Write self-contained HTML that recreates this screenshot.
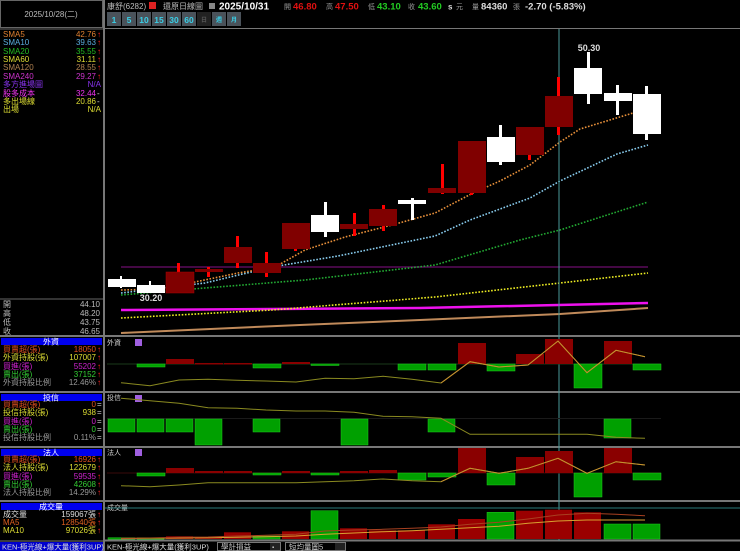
<!DOCTYPE html>
<html><head><meta charset="utf-8"><style>
html,body{margin:0;padding:0;background:#000;width:740px;height:551px;overflow:hidden}
svg{display:block}
text{font-family:"Liberation Sans","Noto Sans CJK TC",sans-serif}
.s{font-size:8px}
.cj{font-family:"Noto Sans CJK TC","WenQuanYi Zen Hei",sans-serif}
</style></head><body>
<svg width="740" height="551" viewBox="0 0 740 551" xmlns="http://www.w3.org/2000/svg">
<rect width="740" height="551" fill="#000"/>
<!-- left panel borders -->
<rect x="0.5" y="0.5" width="102" height="27" fill="none" stroke="#666"/>
<text x="51" y="17" class="s" fill="#bbb" text-anchor="middle">2025/10/28(二)</text>
<line x1="104" y1="0" x2="104" y2="551" stroke="#777" stroke-width="2"/>
<line x1="0" y1="29" x2="103" y2="29" stroke="#666"/>
<g class="s">
<text x="3" y="37" fill="#e08030">SMA5</text><text x="96" y="37" fill="#e08030" text-anchor="end">42.76</text>
<text x="3" y="45" fill="#5aaee0">SMA10</text><text x="96" y="45" fill="#5aaee0" text-anchor="end">39.63</text>
<text x="3" y="54" fill="#22bb22">SMA20</text><text x="96" y="54" fill="#22bb22" text-anchor="end">35.55</text>
<text x="3" y="62" fill="#dddd33">SMA60</text><text x="96" y="62" fill="#dddd33" text-anchor="end">31.11</text>
<text x="3" y="70" fill="#b08050">SMA120</text><text x="96" y="70" fill="#b08050" text-anchor="end">28.55</text>
<text x="3" y="79" fill="#cc33cc">SMA240</text><text x="96" y="79" fill="#cc33cc" text-anchor="end">29.27</text>
<text x="3" y="87" fill="#8833ee">多方進場圖</text><text x="101" y="87" fill="#8833ee" text-anchor="end">N/A</text>
<text x="3" y="96" fill="#ee33ee">股多成本</text><text x="96" y="96" fill="#ee33ee" text-anchor="end">32.44</text>
<text x="3" y="104" fill="#dddd33">多出場線</text><text x="96" y="104" fill="#dddd33" text-anchor="end">20.86</text>
<text x="3" y="112" fill="#dddd33">出場</text><text x="101" y="112" fill="#dddd33" text-anchor="end">N/A</text>
<g fill="#f22"><text x="97" y="37">↑</text><text x="97" y="45">↑</text><text x="97" y="54">↑</text><text x="97" y="62">↑</text><text x="97" y="70">↑</text><text x="97" y="79">↑</text></g>
<text x="97" y="96" fill="#ddd">-</text><text x="97" y="104" fill="#ddd">-</text>
</g>
<line x1="0" y1="299" x2="103" y2="299" stroke="#666"/>
<g class="s" fill="#bbb">
<text x="3" y="307">開</text><text x="100" y="307" text-anchor="end">44.10</text>
<text x="3" y="316">高</text><text x="100" y="316" text-anchor="end">48.20</text>
<text x="3" y="325">低</text><text x="100" y="325" text-anchor="end">43.75</text>
<text x="3" y="334">收</text><text x="100" y="334" text-anchor="end">46.65</text>
</g>
<!-- 外資 -->
<line x1="0" y1="336" x2="740" y2="336" stroke="#777" stroke-width="2"/>
<rect x="1" y="338" width="101" height="7" fill="#0000ee"/>
<text x="51" y="344.5" class="s" fill="#fff" text-anchor="middle">外資</text>
<g class="s">
<text x="3" y="352" fill="#e05020">買賣超(張)</text><text x="96" y="352" fill="#e05020" text-anchor="end">18050</text>
<text x="3" y="360" fill="#dddd33">外資持股(張)</text><text x="96" y="360" fill="#dddd33" text-anchor="end">107007</text>
<text x="3" y="369" fill="#cc22cc">買進(張)</text><text x="96" y="369" fill="#cc22cc" text-anchor="end">55202</text>
<text x="3" y="377" fill="#33cc33">賣出(張)</text><text x="96" y="377" fill="#33cc33" text-anchor="end">37152</text>
<text x="3" y="385" fill="#999">外資持股比例</text><text x="96" y="385" fill="#999" text-anchor="end">12.46%</text>
<g fill="#f22"><text x="97" y="352">↑</text><text x="97" y="360">↑</text><text x="97" y="369">↑</text><text x="97" y="377">↑</text><text x="97" y="385">↑</text></g>
</g>
<line x1="0" y1="392" x2="740" y2="392" stroke="#777" stroke-width="2"/>
<rect x="1" y="394" width="101" height="7" fill="#0000ee"/>
<text x="51" y="400.5" class="s" fill="#fff" text-anchor="middle">投信</text>
<g class="s">
<text x="3" y="407" fill="#e05020">買賣超(張)</text><text x="96" y="407" fill="#e05020" text-anchor="end">0</text>
<text x="3" y="415" fill="#dddd33">投信持股(張)</text><text x="96" y="415" fill="#dddd33" text-anchor="end">938</text>
<text x="3" y="424" fill="#cc22cc">買進(張)</text><text x="96" y="424" fill="#cc22cc" text-anchor="end">0</text>
<text x="3" y="432" fill="#33cc33">賣出(張)</text><text x="96" y="432" fill="#33cc33" text-anchor="end">0</text>
<text x="3" y="440" fill="#999">投信持股比例</text><text x="96" y="440" fill="#999" text-anchor="end">0.11%</text>
<g fill="#ccc"><text x="97" y="407">=</text><text x="97" y="415">=</text><text x="97" y="424">=</text><text x="97" y="432">=</text><text x="97" y="440">=</text></g>
</g>
<line x1="0" y1="447" x2="740" y2="447" stroke="#777" stroke-width="2"/>
<rect x="1" y="449" width="101" height="7" fill="#0000ee"/>
<text x="51" y="455.5" class="s" fill="#fff" text-anchor="middle">法人</text>
<g class="s">
<text x="3" y="462" fill="#e05020">買賣超(張)</text><text x="96" y="462" fill="#e05020" text-anchor="end">16926</text>
<text x="3" y="470" fill="#dddd33">法人持股(張)</text><text x="96" y="470" fill="#dddd33" text-anchor="end">122679</text>
<text x="3" y="479" fill="#cc22cc">買進(張)</text><text x="96" y="479" fill="#cc22cc" text-anchor="end">59535</text>
<text x="3" y="487" fill="#33cc33">賣出(張)</text><text x="96" y="487" fill="#33cc33" text-anchor="end">42608</text>
<text x="3" y="495" fill="#999">法人持股比例</text><text x="96" y="495" fill="#999" text-anchor="end">14.29%</text>
<g fill="#f22"><text x="97" y="462">↑</text><text x="97" y="470">↑</text><text x="97" y="479">↑</text><text x="97" y="487">↑</text><text x="97" y="495">↑</text></g>
</g>
<line x1="0" y1="501" x2="740" y2="501" stroke="#777" stroke-width="2"/>
<rect x="1" y="503" width="101" height="7" fill="#0000ee"/>
<text x="51" y="509.5" class="s" fill="#fff" text-anchor="middle">成交量</text>
<g class="s">
<text x="3" y="517" fill="#ddd">成交量</text><text x="96" y="517" fill="#ddd" text-anchor="end">159067張</text>
<text x="3" y="525" fill="#e06020">MA5</text><text x="96" y="525" fill="#e06020" text-anchor="end">128540張</text>
<text x="3" y="533" fill="#dddd33">MA10</text><text x="96" y="533" fill="#dddd33" text-anchor="end">97026張</text>
<g fill="#f22"><text x="97" y="517">↑</text><text x="97" y="525">↑</text><text x="97" y="533">↑</text></g>
</g>
<line x1="0" y1="541" x2="740" y2="541" stroke="#777" stroke-width="1"/>
<rect x="0" y="542" width="103" height="9" fill="#0000cc"/>
<text x="2" y="549.5" font-size="7.5" fill="#ddd">KEN-極光線+爆大量(獲利3UP)</text>
<text x="107" y="549.5" font-size="7.5" fill="#ddd">KEN-極光線+爆大量(獲利3UP)</text>
<rect x="217.5" y="542.5" width="63" height="8" fill="#000" stroke="#777"/>
<text x="221" y="549.5" font-size="7.5" fill="#ccc">學計損益</text>
<rect x="270" y="543" width="10" height="7" fill="#222"/><text x="272" y="549" font-size="6" fill="#ccc">▪</text>
<rect x="285.5" y="542.5" width="60" height="8" fill="#000" stroke="#777"/>
<text x="289" y="549.5" font-size="7.5" fill="#ccc">短均量圖5</text>
<rect x="335" y="543" width="10" height="7" fill="#222"/>

<!-- header -->
<text x="107" y="9" font-size="8" fill="#bbb">康舒(6282)</text>
<rect x="149" y="2" width="7" height="7" fill="#d22"/>
<text x="163" y="9" font-size="8" fill="#bbb">還原日線圖</text>
<rect x="209" y="3" width="6" height="6" fill="#888"/>
<text x="219" y="9.5" font-size="10" font-weight="bold" fill="#fff">2025/10/31</text>
<text x="284" y="9" font-size="7" fill="#999">開</text>
<text x="293" y="9.5" font-size="9.5" font-weight="bold" fill="#e01010">46.80</text>
<text x="326" y="9" font-size="7" fill="#999">高</text>
<text x="335" y="9.5" font-size="9.5" font-weight="bold" fill="#e01010">47.50</text>
<text x="368" y="9" font-size="7" fill="#999">低</text>
<text x="377" y="9.5" font-size="9.5" font-weight="bold" fill="#22cc22">43.10</text>
<text x="408" y="9" font-size="7" fill="#999">收</text>
<text x="418" y="9.5" font-size="9.5" font-weight="bold" fill="#22cc22">43.60</text>
<text x="448" y="9.5" font-size="8" font-weight="bold" fill="#ddd">s</text>
<text x="456" y="9" font-size="7" fill="#999">元</text>
<text x="472" y="9" font-size="7" fill="#999">量</text>
<text x="481" y="9.5" font-size="9.5" font-weight="bold" fill="#ddd">84360</text>
<text x="513" y="9" font-size="7" fill="#999">張</text>
<text x="525" y="9.5" font-size="9.5" font-weight="bold" fill="#ddd">-2.70 (-5.83%)</text>
<!-- buttons -->
<g font-size="8.5" font-weight="bold" fill="#3ad0e8" text-anchor="middle">
<rect x="107" y="12" width="14" height="14" fill="#4a525a"/><text x="114" y="23">1</text>
<rect x="122" y="12" width="14" height="14" fill="#4a525a"/><text x="129" y="23">5</text>
<rect x="137" y="12" width="14" height="14" fill="#4a525a"/><text x="144" y="23">10</text>
<rect x="152" y="12" width="14" height="14" fill="#4a525a"/><text x="159" y="23">15</text>
<rect x="167" y="12" width="14" height="14" fill="#4a525a"/><text x="174" y="23">30</text>
<rect x="182" y="12" width="14" height="14" fill="#4a525a"/><text x="189" y="23">60</text>
<rect x="197" y="12" width="14" height="14" fill="#222"/><text x="204" y="22" font-size="6" fill="#555">日</text>
<rect x="212" y="12" width="14" height="14" fill="#4a525a"/><text x="219" y="22" font-size="6">週</text>
<rect x="227" y="12" width="14" height="14" fill="#4a525a"/><text x="234" y="22" font-size="6">月</text>
</g>
<line x1="105" y1="28.5" x2="740" y2="28.5" stroke="#777"/>

<!-- main chart lines -->
<line x1="121" y1="267" x2="648" y2="267" stroke="#5a0a5a" stroke-width="1.5"/>
<polyline points="121,333 300,325 420,320 560,314 648,308" fill="none" stroke="#c08a5a" stroke-width="2"/>
<polyline points="121,310 420,308 648,303" fill="none" stroke="#ee11ee" stroke-width="2.5"/>
<g fill="none" stroke-width="1.6" stroke-dasharray="1.6 1.6">
<polyline points="121,318 272,310 435,297 560,283 648,273" stroke="#eeee22"/>
<polyline points="121,295 205,288 305,280 435,265 520,240 560,230 648,202" stroke="#22aa33"/>
<polyline points="121,293 205,283 272,267 338,256 435,236 470,220 530,198 560,181 617,154 648,145" stroke="#88ccee"/>
<polyline points="121,290 165,289 195,282 238,273 275,267 305,250 345,237 392,225 435,213 473,193 500,181 530,165 560,142 580,129 643,110" stroke="#e8903a"/>
</g>
<line x1="559" y1="29" x2="559" y2="541" stroke="#4a9a9a" stroke-width="1"/>

<!-- candles -->
<g>
<!-- 0 white -->
<rect x="120" y="276" width="2" height="12" fill="#fff"/><rect x="108" y="279" width="28" height="8" fill="#fff"/>
<rect x="149" y="281" width="2" height="12" fill="#fff"/><rect x="137" y="285" width="28" height="8" fill="#fff"/>
<rect x="177" y="263" width="3" height="30" fill="#f00"/><rect x="166" y="272" width="28" height="21" fill="#800000" stroke="#a00" stroke-width=".5"/>
<rect x="207" y="267" width="3" height="10" fill="#f00"/><rect x="195" y="269" width="28" height="3" fill="#800000"/>
<rect x="236" y="236" width="3" height="32" fill="#f00"/><rect x="224" y="247" width="28" height="16" fill="#800000"/>
<rect x="265" y="252" width="3" height="25" fill="#f00"/><rect x="253" y="263" width="28" height="10" fill="#800000"/>
<rect x="294" y="244" width="3" height="7" fill="#f00"/><rect x="282" y="223" width="28" height="26" fill="#800000"/>
<rect x="324" y="202" width="3" height="35" fill="#fff"/><rect x="311" y="215" width="28" height="17" fill="#fff"/>
<rect x="353" y="213" width="3" height="23" fill="#f00"/><rect x="340" y="224" width="28" height="5" fill="#800000"/>
<rect x="382" y="205" width="3" height="26" fill="#f00"/><rect x="369" y="209" width="28" height="17" fill="#800000"/>
<rect x="411" y="198" width="3" height="22" fill="#fff"/><rect x="398" y="200" width="28" height="4" fill="#fff"/>
<rect x="441" y="164" width="3" height="30" fill="#f00"/><rect x="428" y="188" width="28" height="5" fill="#800000"/>
<rect x="470" y="185" width="3" height="10" fill="#f00"/><rect x="458" y="141" width="28" height="52" fill="#800000"/>
<rect x="499" y="125" width="3" height="40" fill="#fff"/><rect x="487" y="137" width="28" height="25" fill="#fff"/>
<rect x="528" y="150" width="3" height="10" fill="#f00"/><rect x="516" y="127" width="28" height="28" fill="#800000"/>
<rect x="557" y="77" width="3" height="58" fill="#f00"/><rect x="545" y="96" width="28" height="31" fill="#800000"/>
<rect x="587" y="52" width="3" height="52" fill="#fff"/><rect x="574" y="68" width="28" height="26" fill="#fff"/>
<rect x="616" y="85" width="3" height="30" fill="#fff"/><rect x="604" y="93" width="28" height="8" fill="#fff"/>
<rect x="645" y="86" width="3" height="54" fill="#fff"/><rect x="633" y="94" width="28" height="40" fill="#fff"/>
</g>
<text x="589" y="51" font-size="9" font-weight="bold" fill="#ddd" text-anchor="middle">50.30</text>
<text x="151" y="301" font-size="9" font-weight="bold" fill="#ddd" text-anchor="middle">30.20</text>

<!-- 外資 panel -->
<text x="107" y="345" font-size="7" fill="#ccc">外資</text>
<rect x="135" y="339" width="7" height="7" fill="#a060e0"/>
<line x1="107" y1="364" x2="661" y2="364" stroke="#1a3a1a"/>
<g fill="#00a000" stroke="#2c2" stroke-width=".5">
<rect x="137" y="364" width="28" height="3"/><rect x="253" y="364" width="28" height="4"/><rect x="311" y="364" width="28" height="1.5"/>
<rect x="398" y="364" width="28" height="6"/><rect x="428" y="364" width="28" height="6"/><rect x="487" y="364" width="28" height="7"/>
<rect x="574" y="364" width="28" height="24"/><rect x="633" y="364" width="28" height="6"/>
</g>
<g fill="#8a0000">
<rect x="166" y="359" width="28" height="5"/><rect x="195" y="363" width="28" height="1.5"/><rect x="224" y="363" width="28" height="1.5"/>
<rect x="282" y="362" width="28" height="2"/><rect x="458" y="343" width="28" height="21"/><rect x="516" y="354" width="28" height="10"/>
<rect x="545" y="339" width="28" height="25"/><rect x="604" y="341" width="28" height="23"/>
</g>
<polyline points="121,382.7 150,385.7 179,380 208,379.3 237,380.3 266,381 296,382 325,378.3 354,378.7 383,376.3 412,379.3 441,383 470,361.7 499,367 528,365 558,341 587,372.7 616,350.3 645,356.7" fill="none" stroke="#8a8a20" stroke-width="1"/>
<polyline points="441,383 470,361.7 499,367 528,365 558,341 587,372.7 616,350.3 645,356.7" fill="none" stroke="#c89030" stroke-width="1"/>

<!-- 投信 panel -->
<text x="107" y="400" font-size="7" fill="#ccc">投信</text>
<rect x="135" y="395" width="7" height="7" fill="#a060e0"/>
<line x1="107" y1="418.5" x2="661" y2="418.5" stroke="#1a1a1a"/>
<g fill="#00a000" stroke="#2c2" stroke-width=".5">
<rect x="108" y="419" width="27" height="13"/><rect x="137" y="419" width="27" height="13"/><rect x="166" y="419" width="27" height="13"/>
<rect x="195" y="419" width="27" height="26"/><rect x="253" y="419" width="27" height="13"/><rect x="341" y="419" width="27" height="26"/>
<rect x="428" y="419" width="27" height="13"/><rect x="604" y="419" width="27" height="19"/>
</g>
<polyline points="121,398.3 150,400.7 179,403.3 208,407.7 237,408.3 266,410 296,411 325,411 354,412.3 383,416.3 412,416.7 441,418.3 470,434.3 499,434.3 528,434.3 558,434.3 587,434.3 616,437.3 645,438.3" fill="none" stroke="#8a8a20" stroke-width="1"/>

<!-- 法人 panel -->
<text x="107" y="455" font-size="7" fill="#ccc">法人</text>
<rect x="135" y="449" width="7" height="7" fill="#a060e0"/>
<line x1="107" y1="473" x2="661" y2="473" stroke="#3a0a0a"/>
<g fill="#00a000" stroke="#2c2" stroke-width=".5">
<rect x="137" y="473" width="28" height="3"/><rect x="253" y="473" width="28" height="2"/><rect x="311" y="473" width="28" height="2"/>
<rect x="398" y="473" width="28" height="7"/><rect x="428" y="473" width="28" height="4"/><rect x="487" y="473" width="28" height="12"/>
<rect x="574" y="473" width="28" height="24"/><rect x="633" y="473" width="28" height="7"/>
</g>
<g fill="#8a0000">
<rect x="166" y="468" width="28" height="5"/><rect x="195" y="471" width="28" height="2"/><rect x="224" y="471" width="28" height="2"/>
<rect x="282" y="471" width="28" height="2"/><rect x="369" y="470" width="28" height="3"/><rect x="340" y="471" width="28" height="2"/>
<rect x="458" y="448" width="28" height="25"/><rect x="516" y="457" width="28" height="16"/>
<rect x="545" y="451" width="28" height="22"/><rect x="604" y="448" width="28" height="25"/>
</g>
<polyline points="121,485.7 150,486.7 179,485 208,482.7 237,482.7 266,482.7 296,482.7 325,481.7 354,480.7 383,479 412,480.7 441,481.7 470,468.3 499,473.3 528,468.3 558,458.3 587,473.3 616,461.7 645,465" fill="none" stroke="#8a8a20" stroke-width="1"/>
<polyline points="441,481.7 470,468.3 499,473.3 528,468.3 558,458.3 587,473.3 616,461.7 645,465" fill="none" stroke="#c89030" stroke-width="1"/>

<!-- 成交量 panel -->
<text x="107" y="510" font-size="7" fill="#ccc">成交量</text>
<line x1="105" y1="508" x2="740" y2="508" stroke="#2a7a7a"/>
<g fill="#00a000" stroke="#2c2" stroke-width=".5">
<rect x="108" y="537.7" width="27" height="1.5"/><rect x="137" y="537.7" width="27" height="1.5"/><rect x="253" y="536" width="27" height="3"/>
<rect x="311" y="510.7" width="27" height="28.3"/><rect x="487" y="512.3" width="27" height="26.7"/>
<rect x="604" y="524" width="27" height="15"/><rect x="633" y="524" width="27" height="15"/>
</g>
<g fill="#9a0000">
<rect x="166" y="536.3" width="27" height="2.7"/><rect x="195" y="537.7" width="27" height="1.3"/><rect x="224" y="532.3" width="27" height="6.7"/>
<rect x="282" y="531.3" width="27" height="7.7"/><rect x="340" y="528.3" width="27" height="10.7"/><rect x="369" y="530.3" width="27" height="8.7"/>
<rect x="398" y="530.3" width="27" height="8.7"/><rect x="428" y="524.3" width="27" height="14.7"/><rect x="458" y="519" width="27" height="20"/>
<rect x="516" y="510.7" width="27" height="28.3"/><rect x="545" y="509.7" width="27" height="29.3"/><rect x="574" y="512.3" width="27" height="26.7"/>
</g>
<polyline points="121,538.7 150,538.3 179,538 208,537.7 237,537.3 266,536.7 296,536 325,534.3 354,533 383,531.7 412,530.7 441,529.3 470,527.7 499,526.3 528,523.3 558,521 587,520 616,520 645,520" fill="none" stroke="#d8a030" stroke-width="1"/>
<polyline points="121,538.3 150,538 179,537.3 208,537 237,536 266,535.3 296,534.3 325,531 354,530 383,529.3 412,528.3 441,527 470,524.3 499,522.3 528,519 558,515 587,513.3 616,514.3 645,515.7" fill="none" stroke="#a84020" stroke-width="1"/>
<line x1="105" y1="540" x2="740" y2="540" stroke="#777"/>
</svg>
</body></html>
